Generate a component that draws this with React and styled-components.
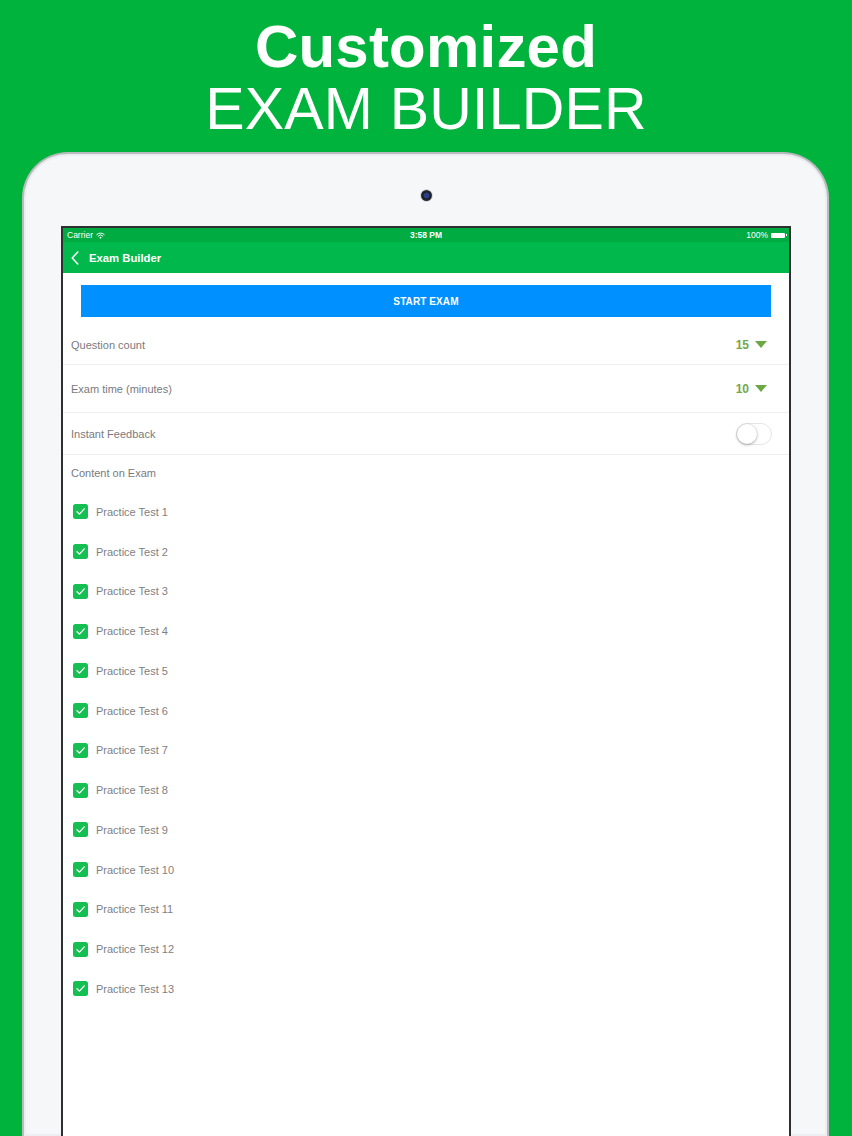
import React from "react";
import styled, { createGlobalStyle } from "styled-components";

const GlobalStyle = createGlobalStyle`
  html, body {
    margin: 0;
    padding: 0;
    background: #00b33c;
  }
  body {
    font-family: "Liberation Sans", Arial, sans-serif;
  }
`;

const Page = styled.div`
  width: 852px;
  height: 1136px;
  overflow: hidden;
  background: #00b33c;
  display: flex;
  flex-direction: column;
`;

const Headline = styled.header`
  padding: 15px 0 11px;
  text-align: center;
  color: #ffffff;
  font-family: "Liberation Sans", Arial, sans-serif;
  font-size: 59px;
  line-height: 63px;
`;

const HeadLine = styled.div`
  font-weight: ${(p) => (p.$bold ? 700 : 400)};
  font-size: ${(p) => (p.$bold ? "60px" : "59px")};
  letter-spacing: ${(p) => (p.$bold ? "0.2px" : "0.2px")};
`;

const Device = styled.div`
  margin: 0 23px 0 22px;
  flex: 1;
  background: #f6f7f9;
  border: 2px solid #b9bbbe;
  border-bottom: none;
  border-radius: 46px 46px 0 0;
  box-shadow: inset 0 0 0 2px #eceef1;
  display: flex;
  flex-direction: column;
  padding: 0 36px 0 37px;
`;

const CameraRow = styled.div`
  height: 72px;
  display: flex;
  justify-content: center;
  padding-top: 36px;
  box-sizing: border-box;
`;

const Camera = styled.div`
  width: 11px;
  height: 11px;
  border-radius: 50%;
  background: radial-gradient(circle at 50% 50%, #2b3f8a 0 30%, #1c1c24 45%, #3a3a40 100%);
  box-shadow: 0 0 0 1px #d8d9dc;
`;

const Screen = styled.div`
  flex: 1;
  border: 2px solid #2e2f31;
  border-bottom: none;
  background: #ffffff;
  display: flex;
  flex-direction: column;
  overflow: hidden;
`;

const StatusBar = styled.div`
  height: 14px;
  background: #00ab42;
  color: #ffffff;
  font-size: 8.5px;
  display: grid;
  grid-template-columns: 1fr auto 1fr;
  align-items: center;
  padding: 0 4px 0 4px;
`;

const StatusLeft = styled.div`
  display: flex;
  align-items: center;
  gap: 3px;
`;

const StatusCenter = styled.div`
  font-weight: 700;
`;

const StatusRight = styled.div`
  display: flex;
  align-items: center;
  justify-content: flex-end;
  gap: 3px;
`;

const Battery = styled.div`
  width: 14px;
  height: 5px;
  background: #ffffff;
  border-radius: 1px;
  position: relative;
  &::after {
    content: "";
    position: absolute;
    right: -2px;
    top: 1.5px;
    width: 1.5px;
    height: 2px;
    background: #ffffff;
  }
`;

const NavBar = styled.div`
  height: 31px;
  background: #00b84b;
  display: flex;
  align-items: center;
  padding-left: 8px;
  gap: 10px;
  color: #ffffff;
`;

const NavTitle = styled.div`
  font-size: 11.3px;
  font-weight: 700;
`;

const ButtonWrap = styled.div`
  padding: 12px 18px 8px;
`;

const StartButton = styled.button`
  width: 100%;
  height: 32px;
  border: none;
  background: #0090ff;
  color: #ffffff;
  font-family: "Liberation Sans", Arial, sans-serif;
  font-size: 10px;
  font-weight: 700;
  letter-spacing: 0.1px;
  display: flex;
  align-items: center;
  justify-content: center;
  padding: 0;
`;

const SettingRow = styled.div`
  height: ${(p) => p.$h}px;
  display: flex;
  align-items: center;
  justify-content: space-between;
  padding: 0 17px 0 8px;
  border-bottom: ${(p) => (p.$divider ? "1px solid #eeeef0" : "none")};
  box-sizing: border-box;
`;

const Label = styled.div`
  font-size: 11px;
  color: #7a7a7e;
`;

const Picker = styled.div`
  display: flex;
  align-items: center;
  gap: 6px;
  color: #72a84a;
  font-size: 12px;
  font-weight: 700;
  padding-right: 5px;
`;

const Caret = styled.div`
  width: 0;
  height: 0;
  border-left: 6.5px solid transparent;
  border-right: 6.5px solid transparent;
  border-top: 7px solid #6aa843;
`;

const Toggle = styled.div`
  width: 36px;
  height: 22px;
  border-radius: 11px;
  border: 1px solid #e6e6e8;
  background: #ffffff;
  box-sizing: border-box;
  position: relative;
  &::before {
    content: "";
    position: absolute;
    left: 0;
    top: 0;
    width: 20px;
    height: 20px;
    border-radius: 50%;
    background: #ffffff;
    box-shadow: 0 1px 3px rgba(0, 0, 0, 0.3), 0 0 0 0.5px rgba(0, 0, 0, 0.08);
  }
`;

const List = styled.div`
  display: flex;
  flex-direction: column;
  padding-top: 1px;
`;

const CheckRow = styled.div`
  height: 39.75px;
  display: flex;
  align-items: center;
  gap: 8px;
  padding-left: 10px;
`;

const CheckBox = styled.div`
  width: 15px;
  height: 15px;
  border-radius: 2.5px;
  background: #15bf52;
  display: flex;
  align-items: center;
  justify-content: center;
`;

const CheckLabel = styled.div`
  font-size: 11px;
  color: #808084;
`;

const Check = () => (
  <svg width="11" height="11" viewBox="0 0 10 10">
    <path d="M1.8 5.3 L4 7.4 L8.4 2.6" fill="none" stroke="#fff" strokeWidth="1.2" strokeLinecap="round" strokeLinejoin="round" />
  </svg>
);

const Wifi = () => (
  <svg width="9" height="7" viewBox="0 0 12 9">
    <path d="M1 3.2 A7 7 0 0 1 11 3.2" fill="none" stroke="#fff" strokeWidth="1.3" strokeLinecap="round" />
    <path d="M2.9 5.1 A4.3 4.3 0 0 1 9.1 5.1" fill="none" stroke="#fff" strokeWidth="1.3" strokeLinecap="round" />
    <circle cx="6" cy="7.4" r="1.2" fill="#fff" />
  </svg>
);

const Back = () => (
  <svg width="8" height="14" viewBox="0 0 8 14">
    <path d="M6.8 1 L1.2 7 L6.8 13" fill="none" stroke="#fff" strokeWidth="1.5" strokeLinecap="round" strokeLinejoin="round" />
  </svg>
);

const tests = Array.from({ length: 13 }, (_, i) => `Practice Test ${i + 1}`);

export default function App() {
  return (
    <>
      <GlobalStyle />
      <Page>
        <Headline>
          <HeadLine $bold>Customized</HeadLine>
          <HeadLine>EXAM BUILDER</HeadLine>
        </Headline>
        <Device>
          <CameraRow>
            <Camera />
          </CameraRow>
          <Screen>
            <StatusBar>
              <StatusLeft>
                Carrier <Wifi />
              </StatusLeft>
              <StatusCenter>3:58 PM</StatusCenter>
              <StatusRight>
                100% <Battery />
              </StatusRight>
            </StatusBar>
            <NavBar>
              <Back />
              <NavTitle>Exam Builder</NavTitle>
            </NavBar>
            <ButtonWrap>
              <StartButton>START EXAM</StartButton>
            </ButtonWrap>
            <SettingRow $h={40} $divider>
              <Label>Question count</Label>
              <Picker>
                15 <Caret />
              </Picker>
            </SettingRow>
            <SettingRow $h={48} $divider>
              <Label>Exam time (minutes)</Label>
              <Picker>
                10 <Caret />
              </Picker>
            </SettingRow>
            <SettingRow $h={42} $divider>
              <Label>Instant Feedback</Label>
              <Toggle />
            </SettingRow>
            <SettingRow $h={36}>
              <Label>Content on Exam</Label>
            </SettingRow>
            <List>
              {tests.map((t) => (
                <CheckRow key={t}>
                  <CheckBox>
                    <Check />
                  </CheckBox>
                  <CheckLabel>{t}</CheckLabel>
                </CheckRow>
              ))}
            </List>
          </Screen>
        </Device>
      </Page>
    </>
  );
}
